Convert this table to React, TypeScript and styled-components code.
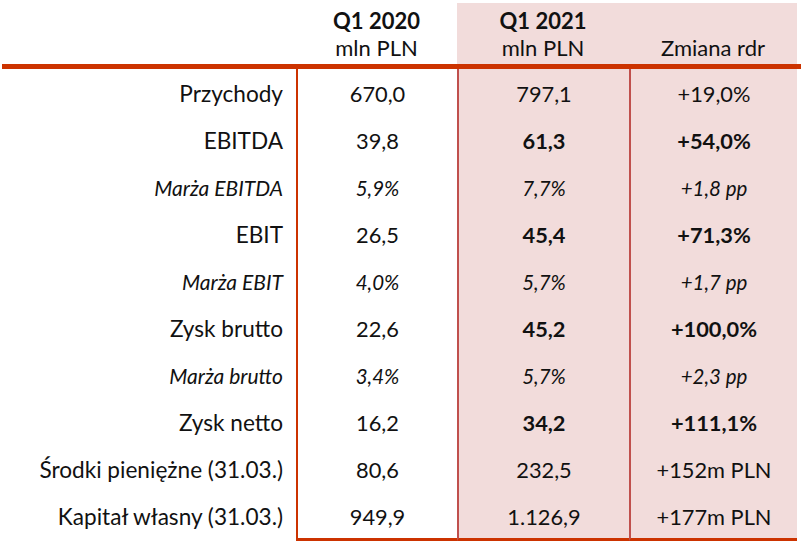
import React from "react";
import styled, { createGlobalStyle } from "styled-components";

const Global = createGlobalStyle`
  html, body { margin: 0; padding: 0; background: #fff; }
  body { font-family: Lato, "Open Sans", sans-serif; color: #111; }
`;

const ORANGE = "#cc3300";
const INNER = "#c0504d";
const PINK = "#f2dcdb";

const Page = styled.div`
  width: 801px;
  height: 541px;
  overflow: hidden;
`;

const Grid = styled.div`
  display: grid;
  grid-template-columns: 294px 161px 172px 168px;
  margin-left: 2px;
`;

const HeadCell = styled.div<{ $pink?: boolean }>`
  height: 61px;
  margin-top: 3px;
  background: ${(p) => (p.$pink ? PINK : "transparent")};
  display: flex;
  flex-direction: column;
  align-items: center;
  justify-content: flex-end;
  padding-bottom: 3px;
  box-sizing: border-box;
  font-size: 22px;
  line-height: 27px;
`;

const HeadTitle = styled.div`
  font-weight: 700;
`;

const Rule = styled.div`
  height: 5px;
  margin-left: 2px;
  background: ${ORANGE};
`;

const Label = styled.div<{ $italic?: boolean }>`
  height: 47px;
  box-sizing: border-box;
  padding-top: 2px;
  display: flex;
  align-items: center;
  justify-content: flex-end;
  padding-right: 13px;
  font-size: ${(p) => (p.$italic ? "21px" : "22.6px")};
  font-style: ${(p) => (p.$italic ? "italic" : "normal")};
`;

const Cell = styled.div<{ $kind: "first" | "pink"; $bold?: boolean; $italic?: boolean; $last?: boolean }>`
  height: ${(p) => (p.$last ? "49px" : "47px")};
  box-sizing: border-box;
  padding-top: ${(p) => (p.$last ? "3px" : "2px")};
  display: flex;
  align-items: center;
  justify-content: center;
  border-left: 2px solid ${(p) => (p.$kind === "first" ? ORANGE : INNER)};
  background: ${(p) => (p.$kind === "pink" ? PINK : "transparent")};
  border-bottom: ${(p) => (p.$last ? `3px solid ${ORANGE}` : "none")};
  font-size: ${(p) => (p.$italic ? "20.5px" : "21.8px")};
  font-weight: ${(p) => (p.$bold ? 700 : 400)};
  font-style: ${(p) => (p.$italic ? "italic" : "normal")};
`;

type Row = { label: string; a: string; b: string; c: string; bold?: boolean; italic?: boolean };

const rows: Row[] = [
  { label: "Przychody", a: "670,0", b: "797,1", c: "+19,0%" },
  { label: "EBITDA", a: "39,8", b: "61,3", c: "+54,0%", bold: true },
  { label: "Marża EBITDA", a: "5,9%", b: "7,7%", c: "+1,8 pp", italic: true },
  { label: "EBIT", a: "26,5", b: "45,4", c: "+71,3%", bold: true },
  { label: "Marża EBIT", a: "4,0%", b: "5,7%", c: "+1,7 pp", italic: true },
  { label: "Zysk brutto", a: "22,6", b: "45,2", c: "+100,0%", bold: true },
  { label: "Marża brutto", a: "3,4%", b: "5,7%", c: "+2,3 pp", italic: true },
  { label: "Zysk netto", a: "16,2", b: "34,2", c: "+111,1%", bold: true },
  { label: "Środki pieniężne (31.03.)", a: "80,6", b: "232,5", c: "+152m PLN" },
  { label: "Kapitał własny (31.03.)", a: "949,9", b: "1.126,9", c: "+177m PLN" },
];

export default function App() {
  return (
    <Page>
      <Global />
      <Grid>
        <HeadCell />
        <HeadCell>
          <HeadTitle>Q1 2020</HeadTitle>
          <div>mln PLN</div>
        </HeadCell>
        <HeadCell $pink>
          <HeadTitle>Q1 2021</HeadTitle>
          <div>mln PLN</div>
        </HeadCell>
        <HeadCell $pink>
          <div>Zmiana rdr</div>
        </HeadCell>
      </Grid>
      <Rule />
      <Grid>
        {rows.map((r, i) => {
          const last = i === rows.length - 1;
          return (
            <React.Fragment key={r.label}>
              <Label $italic={r.italic}>{r.label}</Label>
              <Cell $kind="first" $italic={r.italic} $last={last}>{r.a}</Cell>
              <Cell $kind="pink" $italic={r.italic} $bold={r.bold} $last={last}>{r.b}</Cell>
              <Cell $kind="pink" $italic={r.italic} $bold={r.bold} $last={last}>{r.c}</Cell>
            </React.Fragment>
          );
        })}
      </Grid>
    </Page>
  );
}
